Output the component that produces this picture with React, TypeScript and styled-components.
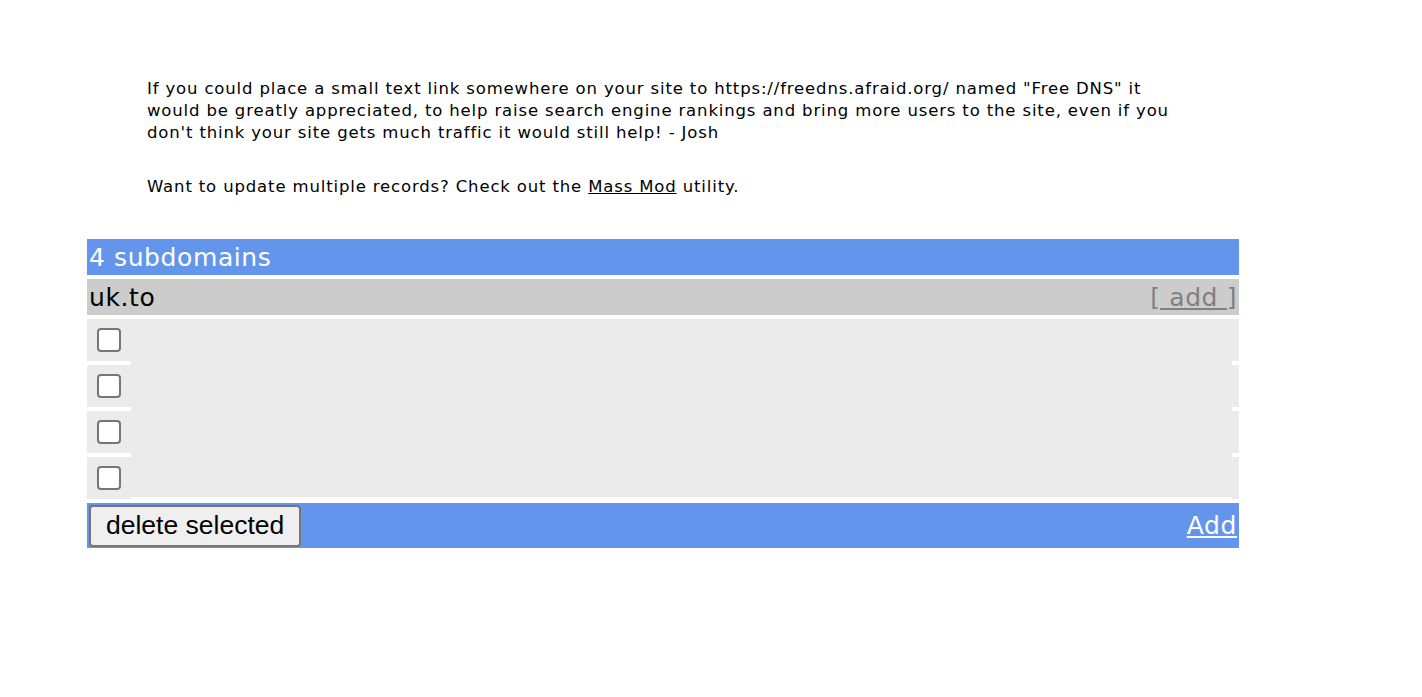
import { FC } from "react";
import { styled, createGlobalStyle } from "styled-components";

const GlobalStyle = createGlobalStyle`
  body {
    margin: 0;
    background: #fff;
    font-family: "DejaVu Sans", Verdana, sans-serif;
    color: #000;
  }
`;

const Page = styled.div`
  padding-top: 78px;
`;

const Notice = styled.div`
  margin-left: 147px;
  width: 1022px;
  font-size: 16.5px;
  line-height: 22px;
  letter-spacing: 0.85px;
`;

const Para = styled.p<{ $gap?: number }>`
  margin: 0 0 ${(p) => p.$gap ?? 0}px 0;
`;

const Link = styled.a`
  color: #000;
  text-decoration: underline;
`;

const Table = styled.div`
  margin: 0 0 0 87px;
  width: 1152px;
  display: flex;
  flex-direction: column;
  gap: 4px;
`;

const Bar = styled.div<{ $bg: string; $h: number }>`
  display: flex;
  align-items: center;
  justify-content: space-between;
  height: ${(p) => p.$h}px;
  background: ${(p) => p.$bg};
  font-size: 25px;
  letter-spacing: 0.6px;
`;

const HeadText = styled.span`
  color: #fff;
  padding-left: 2px;
`;

const Domain = styled.span`
  color: #000;
  padding-left: 2px;
`;

const AddLink = styled.a<{ $light?: boolean }>`
  color: ${(p) => (p.$light ? "#fff" : "#808080")};
  text-decoration: underline;
  padding-right: 2px;
`;

const Rows = styled.div`
  display: grid;
  grid-template-columns: 44px 1101px 7px;
  grid-template-rows: repeat(4, 42px);
  row-gap: 4px;
`;

const CheckCell = styled.div<{ $row: number }>`
  grid-column: 1;
  grid-row: ${(p) => p.$row};
  background: #ebebeb;
  display: flex;
  align-items: center;
  justify-content: center;
`;

const Blank = styled.div`
  grid-column: 2;
  grid-row: 1 / span 4;
  background: #eaeaea;
  margin-bottom: 2px;
`;

const Edge = styled.div<{ $row: number }>`
  grid-column: 3;
  grid-row: ${(p) => p.$row};
  background: #ebebeb;
`;

const Box = styled.span`
  display: block;
  width: 24px;
  height: 24px;
  box-sizing: border-box;
  border: 2px solid #767676;
  border-radius: 4px;
  background: #fff;
`;

const Button = styled.button`
  margin-left: 2px;
  height: 42px;
  padding: 0 15px;
  font-family: "Liberation Sans", Arial, sans-serif;
  font-size: 26.5px;
  letter-spacing: 0;
  color: #000;
  background: #efefef;
  border: 2px solid #767676;
  border-radius: 4px;
`;

const rows = [1, 2, 3, 4];

const App: FC = () => {
  return (
    <Page>
      <GlobalStyle />
      <Notice>
        <Para $gap={32}>
          If you could place a small text link somewhere on your site to
          https://freedns.afraid.org/ named "Free DNS" it would be greatly
          appreciated, to help raise search engine rankings and bring more
          users to the site, even if you don't think your site gets much
          traffic it would still help! - Josh
        </Para>
        <Para $gap={41}>
          Want to update multiple records? Check out the{" "}
          <Link href="#">Mass Mod</Link> utility.
        </Para>
      </Notice>
      <Table>
        <Bar $bg="#6495ed" $h={36}>
          <HeadText>4 subdomains</HeadText>
        </Bar>
        <Bar $bg="#cccccc" $h={36}>
          <Domain>uk.to</Domain>
          <AddLink href="#">[ add ]</AddLink>
        </Bar>
        <Rows>
          {rows.map((r) => (
            <CheckCell key={`c${r}`} $row={r}>
              <Box />
            </CheckCell>
          ))}
          <Blank />
          {rows.map((r) => (
            <Edge key={`e${r}`} $row={r} />
          ))}
        </Rows>
        <Bar $bg="#6495ed" $h={45}>
          <Button>delete selected</Button>
          <AddLink href="#" $light>
            Add
          </AddLink>
        </Bar>
      </Table>
    </Page>
  );
};

export default App;
